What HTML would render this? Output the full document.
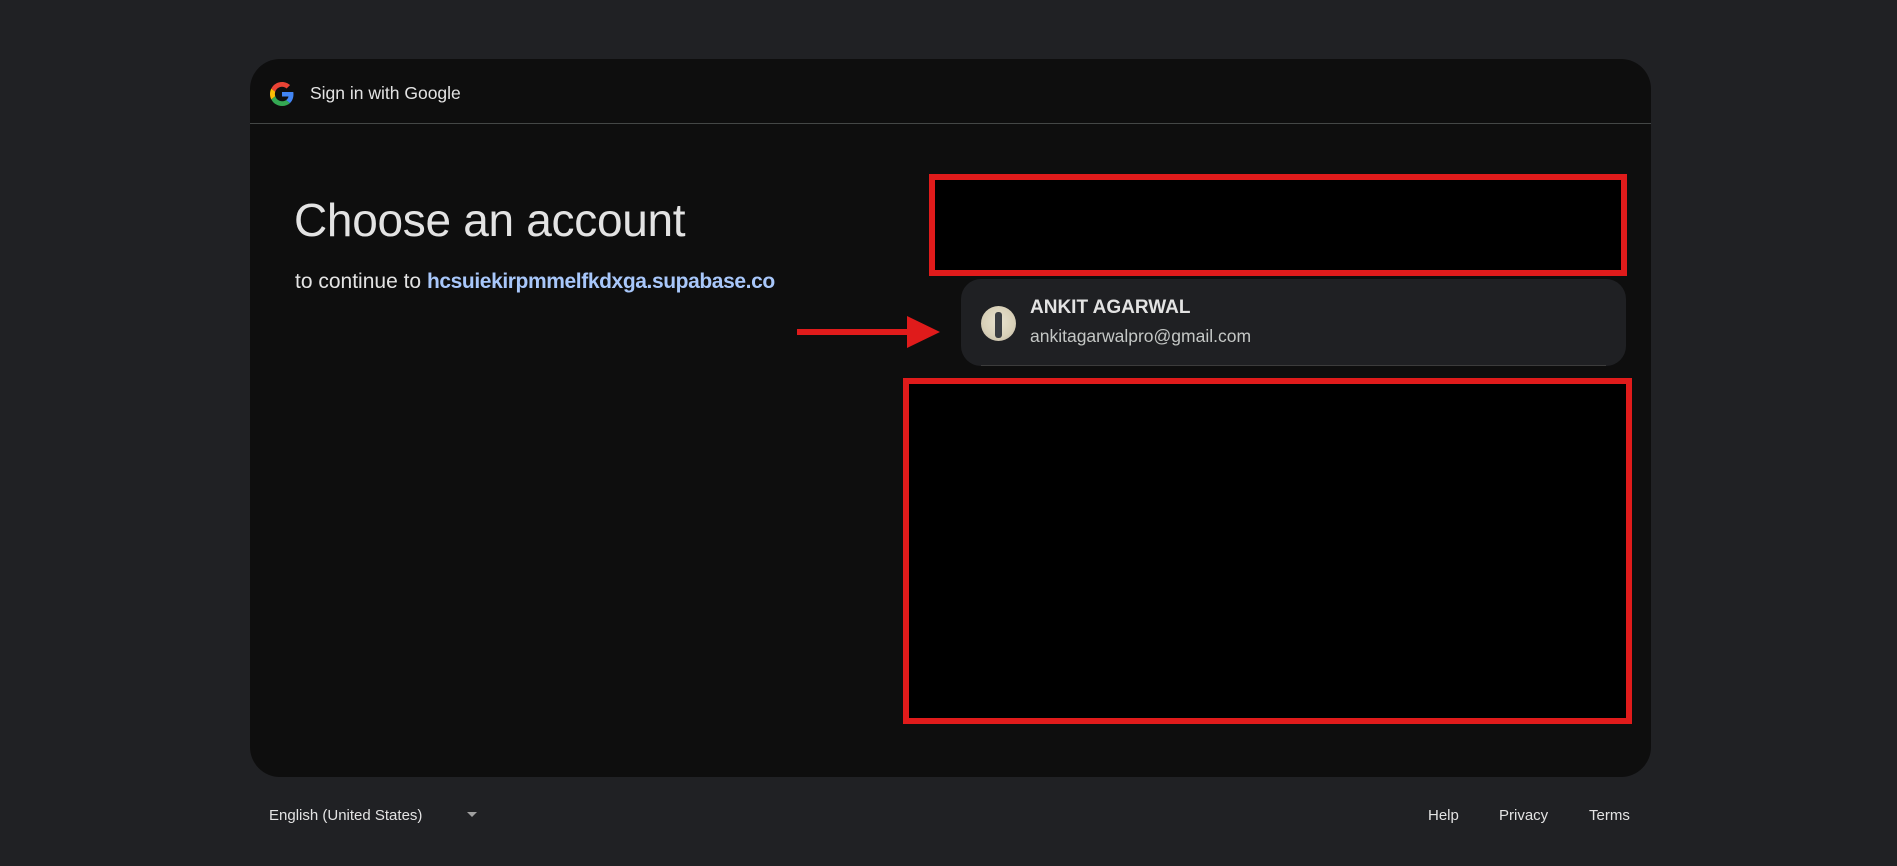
<!DOCTYPE html>
<html><head><meta charset="utf-8"><style>
*{margin:0;padding:0;box-sizing:border-box}
body{width:1897px;height:866px;background:#202124;font-family:"Liberation Sans",sans-serif;position:relative;overflow:hidden;color:#e3e3e3}
.card{position:absolute;left:250px;top:59px;width:1401px;height:718px;background:#0e0e0e;border-radius:30px}
.a{position:absolute}
.div{position:absolute;left:250px;top:123px;width:1401px;height:1px;background:#444746}
.red{position:absolute;background:#000;border:6px solid #e01b1b}
</style></head><body>
<div class="card"></div>
<svg class="a" style="left:270px;top:82px" width="24" height="24" viewBox="0 0 48 48">
<path fill="#EA4335" d="M24 9.5c3.54 0 6.71 1.22 9.21 3.6l6.85-6.85C35.9 2.38 30.47 0 24 0 14.62 0 6.51 5.380 2.56 13.22l7.98 6.19C12.43 13.72 17.74 9.5 24 9.5z"/>
<path fill="#4285F4" d="M46.98 24.55c0-1.57-.15-3.09-.38-4.55H24v9.02h12.940c-.58 2.96-2.26 5.48-4.78 7.18l7.73 6c4.51-4.18 7.09-10.36 7.09-17.65z"/>
<path fill="#FBBC05" d="M10.53 28.59c-.48-1.45-.76-2.99-.76-4.59s.27-3.14.76-4.59l-7.98-6.19C.92 16.46 0 20.12 0 24c0 3.88.92 7.54 2.56 10.78l7.97-6.19z"/>
<path fill="#34A853" d="M24 48c6.48 0 11.93-2.13 15.89-5.81l-7.73-6c-2.15 1.45-4.92 2.3-8.16 2.3-6.26 0-11.57-4.22-13.47-9.91l-7.98 6.19C6.51 42.62 14.62 48 24 48z"/>
</svg>
<div class="a" style="left:310px;top:83px;font-size:17.5px;color:#e3e3e3">Sign in with Google</div>
<div class="div"></div>
<div class="a" style="left:294px;top:193px;font-size:46px;color:#e3e3e3;letter-spacing:-0.3px">Choose an account</div>
<div class="a" style="left:295px;top:270px;font-size:21px;color:#e3e3e3">to continue to <span style="color:#a8c7fa;font-weight:bold;letter-spacing:-0.4px">hcsuiekirpmmelfkdxga.supabase.co</span></div>
<div class="red" style="left:929px;top:174px;width:698px;height:102px"></div>
<div class="a" style="left:961px;top:279px;width:665px;height:87px;background:#1f2023;border-radius:20px"></div>
<div class="a" style="left:981px;top:365px;width:625px;height:1px;background:#3c3c3c"></div>
<div class="a" style="left:981px;top:306px;width:35px;height:35px;border-radius:50%;background:radial-gradient(circle at 50% 45%,#e8e2d0 0,#d8d0b8 60%,#b8b0a0 100%)"><div style="position:absolute;left:14px;top:6px;width:7px;height:26px;background:#3a3d42;border-radius:3px"></div></div>
<div class="a" style="left:1030px;top:297px;font-size:19px;font-weight:bold;color:#e3e3e3">ANKIT AGARWAL</div>
<div class="a" style="left:1030px;top:326px;font-size:17.5px;color:#c4c7c5">ankitagarwalpro@gmail.com</div>
<div class="a" style="left:797px;top:329px;width:112px;height:6px;background:#e01b1b"></div>
<svg class="a" style="left:907px;top:316px" width="34" height="32"><polygon points="0,0 33,16 0,32" fill="#e01b1b"/></svg>
<div class="red" style="left:903px;top:378px;width:729px;height:346px"></div>
<div class="a" style="left:269px;top:807px;font-size:15px;color:#e3e3e3">English (United States)</div>
<svg class="a" style="left:467px;top:812px" width="10" height="6"><polygon points="0,0 10,0 5,5" fill="#a0a0a0"/></svg>
<div class="a" style="left:1428px;top:807px;font-size:15px;color:#e3e3e3">Help</div>
<div class="a" style="left:1499px;top:807px;font-size:15px;color:#e3e3e3">Privacy</div>
<div class="a" style="left:1589px;top:807px;font-size:15px;color:#e3e3e3">Terms</div>
</body></html>
